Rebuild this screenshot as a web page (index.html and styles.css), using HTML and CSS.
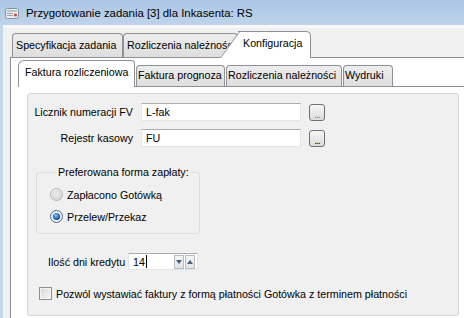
FILE: index.html
```html
<!DOCTYPE html>
<html>
<head>
	<meta charset="utf-8">
	<title>Przygotowanie zadania</title>
	<link rel="stylesheet" href="styles.css">
</head>
<body>

	<div class="ventana">
		<div class="barraTitulo">
			<svg class="icono" width="16" height="16" viewBox="0 0 16 16">
				<rect x="1.5" y="3.5" width="13" height="10" rx="2" fill="#e9ecef" stroke="#8a9099"/>
				<rect x="3" y="5" width="10" height="2" fill="#b8c2cc"/>
				<rect x="3" y="8" width="6" height="1" fill="#9aa4ae"/>
				<rect x="3" y="10" width="6" height="1" fill="#9aa4ae"/>
				<circle cx="11.5" cy="10" r="1.6" fill="#c9473d"/>
			</svg>
			<span class="titulo">Przygotowanie zadania [3] dla Inkasenta: RS</span>
		</div>

		<div class="marco">
			<div class="bordeMarco"></div>
			<div class="cliente">

				<div class="pestanas pestanasExternas">
					<div class="pestana ext ancho1">Specyfikacja zadania</div>
					<div class="pestana ext ancho2">Rozliczenia należności</div>
					<div class="pestana ext activa inclinada">Konfiguracja</div>
				</div>

				<div class="paginaExterna">
					<div class="pestanas pestanasInternas">
						<div class="pestana int activa">Faktura rozliczeniowa</div>
						<div class="pestana int">Faktura prognoza</div>
						<div class="pestana int">Rozliczenia należności</div>
						<div class="pestana int">Wydruki</div>
					</div>

					<div class="paginaInterna">
						<div class="panel">

							<div class="fila filaPrimera">
								<label class="etiqueta">Licznik numeracji FV</label>
								<div class="campo">L-fak</div>
								<div class="botonPuntos puntosClaros">...</div>
							</div>
							<div class="fila filaSegunda">
								<label class="etiqueta">Rejestr kasowy</label>
								<div class="campo">FU</div>
								<div class="botonPuntos">...</div>
							</div>

							<fieldset class="grupo">
								<legend>Preferowana forma zapłaty:</legend>
								<div class="opcion">
									<svg class="radio" width="13" height="13" viewBox="0 0 13 13">
										<defs>
											<radialGradient id="rOff" cx="0.4" cy="0.35" r="0.7">
												<stop offset="0" stop-color="#ffffff"/>
												<stop offset="1" stop-color="#d4d4d4"/>
											</radialGradient>
										</defs>
										<circle cx="6.5" cy="6.5" r="6" fill="url(#rOff)" stroke="#b4b4b4"/>
										<circle cx="6.5" cy="6.5" r="3.8" fill="#e6e6e6" stroke="#cfcfcf" stroke-width="0.8"/>
									</svg>
									<span>Zapłacono Gotówką</span>
								</div>
								<div class="opcion">
									<svg class="radio" width="13" height="13" viewBox="0 0 13 13">
										<defs>
											<radialGradient id="rOn" cx="0.4" cy="0.35" r="0.7">
												<stop offset="0" stop-color="#8fc4f2"/>
												<stop offset="0.6" stop-color="#2a6fc0"/>
												<stop offset="1" stop-color="#123f7a"/>
											</radialGradient>
										</defs>
										<circle cx="6.5" cy="6.5" r="6" fill="#eef2f6" stroke="#4e6a8c"/>
										<circle cx="6.5" cy="6.5" r="3.6" fill="url(#rOn)"/>
									</svg>
									<span>Przelew/Przekaz</span>
								</div>
							</fieldset>

							<div class="fila filaCredito">
								<label class="etiquetaCredito">Ilość dni kredytu</label>
								<div class="spin">
									<span class="valor">14</span><span class="cursor"></span>
									<span class="espaciador"></span>
									<span class="botonSpin">
										<svg width="6" height="4" viewBox="0 0 6 4"><path d="M0 0h6L3 4z" fill="#4a5e80"/></svg>
									</span>
									<span class="botonSpin">
										<svg width="6" height="4" viewBox="0 0 6 4"><path d="M0 4h6L3 0z" fill="#4a5e80"/></svg>
									</span>
								</div>
							</div>

							<div class="fila filaCheck">
								<span class="casilla"></span>
								<span>Pozwól wystawiać faktury z formą płatności Gotówka z terminem płatności</span>
							</div>

						</div>
					</div>
				</div>

			</div>
		</div>
	</div>

</body>
</html>
```

FILE: styles.css
```css
*{box-sizing: border-box;}
body{
	margin: 0;
	width: 464px;
	height: 318px;
	overflow: hidden;
	background: #f0f0f0;
	font-family: "Liberation Sans", Arial, sans-serif;
	font-size: 10.7px;
	color: #000;
}

/* barra de titulo */
div.barraTitulo{
	height: 25px;
	display: flex;
	align-items: center;
	padding-left: 4px;
	background: linear-gradient(#aac5e3, #bfd4eb);
}
svg.icono{margin-right: 6px;}
span.titulo{font-size: 11.4px; color: #000;}

div.marco{display: flex; height: 293px;}
div.bordeMarco{width: 3px; background: #c3d7ed;}
div.cliente{
	flex: 1;
	padding: 6px 0 0 7px;
	background: linear-gradient(#f8f8f8 0, #f8f8f8 3px, #f0f0f0 3px);
}

/* pestanas */
div.pestanas{display: flex; align-items: flex-end; position: relative; z-index: 1;}
div.pestanasExternas{height: 26px; padding-left: 2px;}
div.pestanasInternas{height: 25px;}

div.pestana{
	border: 1px solid #8e9097;
	border-bottom: none;
	border-radius: 4px 4px 0 0;
	background: linear-gradient(#ededed, #dedede);
	white-space: nowrap;
	overflow: hidden;
}
div.pestana.ext{height: 24px; line-height: 22px; padding-left: 3px;}
div.ancho1{width: 111px;}
div.ancho2{width: 115px;}
div.pestana.activa{background: #fff;}
div.pestana.ext.activa{
	height: 27px;
	margin-bottom: -1px;
	width: 73px;
	padding: 5px 0 0 5px;
	line-height: 13px;
	border-radius: 0 5px 0 0;
	border-left: none;
	position: relative;
	overflow: visible;
	z-index: 2;
}
div.inclinada::before{
	content: "";
	position: absolute;
	left: -18px;
	top: -1px;
	bottom: 0;
	width: 24px;
	background: #fff;
	border-left: 1px solid #8e9097;
	border-top: 1px solid #8e9097;
	transform: skewX(-36deg);
	transform-origin: bottom left;
	z-index: -1;
}

div.pestana.int{height: 21px; line-height: 19px; padding-left: 1px; margin-right: 1px;}
div.pestana.int:nth-child(2){width: 89px;}
div.pestana.int:nth-child(3){width: 116px;}
div.pestana.int:nth-child(4){width: 50px;}
div.pestana.int.activa{
	width: 117px;
	height: 27px;
	margin-bottom: -1px;
	padding: 5px 0 0 6px;
	line-height: 13px;
	border-radius: 6px 4px 0 0;
}

/* paginas */
div.paginaExterna{
	height: 261px;
	border-top: 1px solid #8e9097;
	border-left: 1px solid #8e9097;
	background: #fff;
	padding: 3px 0 0 7px;
}
div.paginaInterna{
	border-top: 1px solid #8e9097;
	background: #fff;
	padding: 6px 0 0 9px;
	height: 233px;
}
div.panel{
	width: 432px;
	height: 223px;
	border: 1px solid #d6d6d6;
	border-radius: 3px;
	background: #f0f0f0;
}

/* filas */
div.fila{display: flex; align-items: center;}
div.filaPrimera{margin-top: 9px;}
div.filaSegunda{margin-top: 8px;}
label.etiqueta{width: 105px; text-align: right;}
div.campo{
	width: 160px;
	height: 18px;
	margin-left: 8px;
	padding: 1px 0 0 4px;
	line-height: 15px;
	background: #fff;
	border: 1px solid #e2e5ea;
	border-top-color: #abadb3;
}
div.botonPuntos{
	width: 16px;
	height: 17px;
	margin-left: 8px;
	border: 1px solid #707070;
	border-radius: 3px;
	background: linear-gradient(#f6f6f6, #dcdcdc);
	text-align: center;
	line-height: 19px;
	font-size: 10px;
	letter-spacing: -1px;
}
div.puntosClaros{color: #7a7a7a;}

/* grupo */
fieldset.grupo{
	margin: 19px 0 0 8px;
	width: 164px;
	padding: 9px 0 10px 13px;
	border: 1px solid #d5dfe5;
	border-radius: 3px;
	min-width: 0;
}
fieldset.grupo legend{
	margin-left: 6px;
	padding: 0 2px;
	line-height: 13px;
}
div.opcion{display: flex; align-items: center; height: 13px;}
div.opcion + div.opcion{margin-top: 9px;}
svg.radio{margin-right: 4px;}

/* credito */
div.filaCredito{margin-top: 19px; padding-left: 20px;}
label.etiquetaCredito{width: 80px;}
div.spin{
	display: flex;
	align-items: center;
	width: 70px;
	height: 17px;
	padding: 0 2px 0 4px;
	background: #fff;
	border: 1px solid #e2e5ea;
	border-top-color: #abadb3;
}
span.cursor{width: 1px; height: 13px; background: #000; margin-left: 1px;}
span.espaciador{flex: 1;}
span.botonSpin{
	display: flex;
	align-items: center;
	justify-content: center;
	width: 10px;
	height: 14px;
	margin-left: 1px;
	border: 1px solid #b9bcc2;
	background: linear-gradient(#f4f4f4, #e2e4e8);
}

/* casilla */
div.filaCheck{margin-top: 17px; padding-left: 11px;}
span.casilla{
	width: 13px;
	height: 13px;
	margin-right: 4px;
	border: 1px solid #8f8f8f;
	background: linear-gradient(135deg, #d8d8d8, #f7f7f7);
	box-shadow: inset 0 0 0 1px #f4f4f4;
}
```
